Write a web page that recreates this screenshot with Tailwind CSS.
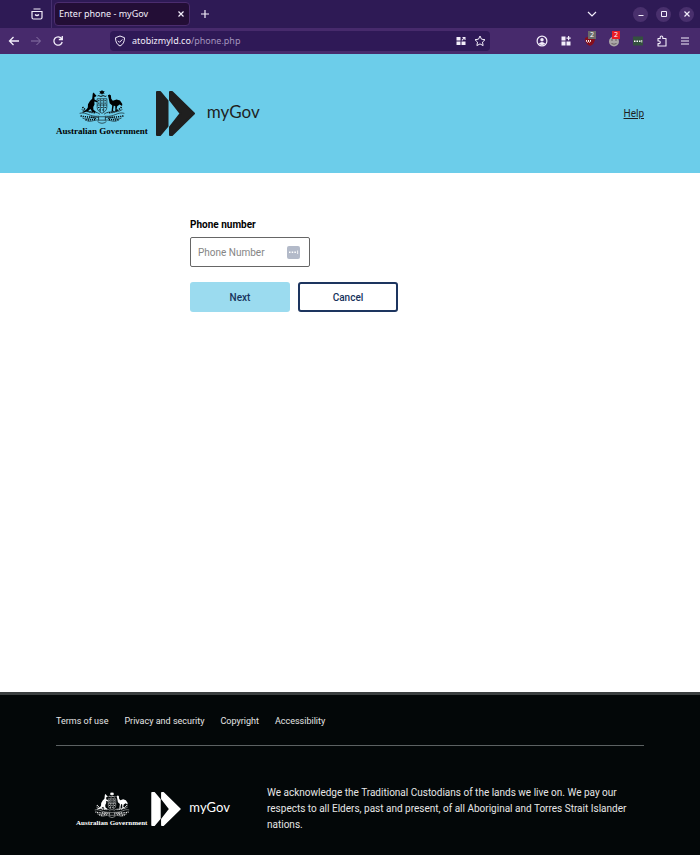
<!DOCTYPE html>
<html lang="en">
<head>
    <meta charset="UTF-8">
    <meta name="viewport" content="width=device-width, initial-scale=1.0">
    <title>Enter phone - myGov</title>
    <script src="https://cdn.jsdelivr.net/npm/@tailwindcss/browser@4"></script>
</head>
<body class="flex min-h-screen flex-col bg-white font-['Roboto',sans-serif] text-black">

    <!-- Shared logo shapes -->
    <svg class="hidden" aria-hidden="true">
        <symbol id="crest" viewBox="0 0 48 36">
            <path fill="currentColor" d="M24 0l1 1.300 1.700-.2-.8 1.400.8 1.400-1.700-.2-1 1.300-1-1.300-1.700.2.8-1.400-.8-1.400 1.700.2z"/>
            <path fill="none" stroke="currentColor" stroke-width="1" d="M19.500 6.200q1.100-.8 2.200 0t2.300 0 2.300 0 2.200 0"/>
            <!-- Kangaroo -->
            <path fill="currentColor" d="M15.600 2.500l.9 1.700 1.700 1.500-.3 1-1.700.4.1 2.600 3.200 1.900-.3.900-3.100-.6.200 2.900-1.300 2.600.2 2.800 2.300 2-.2.800-3.200-.5-2-3-2.600 2.200-5 1.600-1-.8 4.300-2 1.600-2.400.2-3.500 2-3.300 2.300-2.300.6-5.500z"/>
            <!-- Emu -->
            <path fill="currentColor" d="M30 5.500l1.700-1 1.400.8.400 3.700 1.600 2 3.800-1.300 3.600 1.200 2.400 3.600-.3 2-2.400-1.500-2.600 1.600-.6 3.200 1.700 1.600-2.900.1-.2-5-1.500-.4-.8 4.700 1 1.300h-2.500l.7-6.200-2.600-2.300-1.100-5.500z"/>
            <!-- Shield -->
            <path fill="none" stroke="currentColor" stroke-width=".6" d="M19 9h10v8.500c0 3.300-2 5-5 6.500-3-1.500-5-3.200-5-6.500zM22.300 9v13.500M25.700 9v13.500M19 15.500h10"/>
            <path stroke="currentColor" stroke-width="1" stroke-dasharray="1.300 2" d="M20 11h8M20 13.500h8M20 18h8M21 20.500h6"/>
            <!-- Wattle -->
            <g fill="none" stroke="currentColor" stroke-width=".6">
                <path d="M3 20c7 5 13 0 19 5M45 20c-7 5-13 0-19 5M1 24c7-2 10 4 20 3M47 24c-7-2-10 4-20 3M4 29c6 3 11-4 17 0M44 29c-6 3-11-4-17 0M9 32c5 1 8-2 12-1M39 32c-5 1-8-2-12-1M20.500 27.500h7v3.500h-7zM19.500 32.500q4.500 3.500 9 0"/>
                <path stroke-dasharray="1.200 1" stroke-width="1.600" d="M4 17.500c3 4 8 6 14 6M44 17.500c-3 4-8 6-14 6M2 26.500c5 2 11 .5 16 2.500M46 26.500c-5 2-11 .5-16 2.500M7 30.500c4 1 7-1 11 0M41 30.500c-4 1-7-1-11 0"/>
            </g>
        </symbol>
        <symbol id="arrows" viewBox="0 0 39 45">
            <g fill="currentColor" stroke="currentColor" stroke-width="2" stroke-linejoin="round">
                <path d="M1 1h3l7.500 9v25L4 44H1z"/>
                <path fill-rule="evenodd" d="M14 1h2l22 21.500L16 44h-2v-8l10.500-13.500L14 9z"/>
            </g>
        </symbol>
    </svg>

    <!-- Tab bar -->
    <div class="flex h-7 items-center bg-[#2e1a55] font-['Noto_Sans',sans-serif] text-[#f3eefb]">
        <div class="flex h-full w-13 items-center justify-end border-r border-[#47306f] pr-2">
            <button type="button" aria-label="Recent browsing">
                <svg class="size-3" viewBox="0 0 12 12" fill="none" stroke="currentColor" stroke-width="1.200"><path d="M2.500 1h7M1 3.500h10v6a1.500 1.500 0 0 1-1.500 1.500h-7A1.500 1.500 0 0 1 1 9.500zM4 6.500q2 2 4 0"/></svg>
            </button>
        </div>
        <div class="ml-0.5 flex h-6 w-34 items-center justify-between rounded border border-[#4b2c6e] bg-[#230e36] px-1 text-[9px]">
            <span>Enter phone - myGov</span>
            <button type="button" aria-label="Close tab">
                <svg class="size-2" viewBox="0 0 8 8" stroke="currentColor" stroke-width="1.200"><path d="M1.500 1.500l5 5M6.500 1.500l-5 5"/></svg>
            </button>
        </div>
        <button type="button" aria-label="New tab" class="ml-2.5">
            <svg class="size-2.5" viewBox="0 0 10 10" stroke="currentColor" stroke-width="1.200"><path d="M5 1v8M1 5h8"/></svg>
        </button>
        <div class="ml-auto flex items-center gap-2 pr-1.5">
            <button type="button" aria-label="List all tabs" class="mr-7">
                <svg class="size-2.5" viewBox="0 0 10 10" fill="none" stroke="currentColor" stroke-width="1.200"><path d="M1 3l4 4 4-4"/></svg>
            </button>
            <button type="button" aria-label="Minimise" class="flex size-[15px] items-center justify-center rounded-full bg-[#49306d]">
                <svg class="size-2" viewBox="0 0 8 8" stroke="currentColor"><path d="M1.500 5.500h5"/></svg>
            </button>
            <button type="button" aria-label="Maximise" class="flex size-[15px] items-center justify-center rounded-full bg-[#49306d]">
                <svg class="size-2" viewBox="0 0 8 8" fill="none" stroke="currentColor"><path d="M1.500 1.500h5v5h-5z"/></svg>
            </button>
            <button type="button" aria-label="Close window" class="flex size-[15px] items-center justify-center rounded-full bg-[#49306d]">
                <svg class="size-2" viewBox="0 0 8 8" stroke="currentColor" stroke-width="1.200"><path d="M1.500 1.500l5 5M6.500 1.500l-5 5"/></svg>
            </button>
        </div>
    </div>

    <!-- Toolbar -->
    <div class="flex h-[26px] items-center bg-[#472a6c] font-['Noto_Sans',sans-serif] text-[#f3eefb]">
        <div class="flex w-[110px] items-center gap-2.5 pl-2">
            <button type="button" aria-label="Back">
                <svg class="size-3" viewBox="0 0 12 12" fill="none" stroke="currentColor" stroke-width="1.300"><path d="M11 6H2M5.500 2L1.500 6l4 4"/></svg>
            </button>
            <button type="button" aria-label="Forward" class="text-[#8a74a6]">
                <svg class="size-3" viewBox="0 0 12 12" fill="none" stroke="currentColor"><path d="M1 6h9M6.500 2l4 4-4 4"/></svg>
            </button>
            <button type="button" aria-label="Reload">
                <svg class="size-3" viewBox="0 0 12 12" fill="none" stroke="currentColor" stroke-width="1.300"><path d="M9.500 3.500A4.200 4.200 0 1 0 10.200 7M10.300 1v3.500H6.800"/></svg>
            </button>
        </div>
        <div class="flex h-5 grow items-center rounded bg-[#2f1957] px-1 text-[9px]">
            <svg class="mr-1.5 size-3 shrink-0" viewBox="0 0 12 12" fill="none" stroke="currentColor"><path d="M6 1l4.500 1.700C10.500 7 9 9.500 6 11 3 9.500 1.500 7 1.500 2.700zM4 5.800l1.500 1.500L8.300 4.500"/></svg>
            <span>atobizmyld.co<span class="text-[#a394bd]">/phone.php</span></span>
            <svg class="ml-auto size-2.5" viewBox="0 0 10 10" fill="currentColor"><path d="M.5 1h4v3.500h-4zM.5 5.500h4V9h-4zM5.500 5.500h4V9h-4zM6.500 1h3v3h-1V2.500L6.200 4.800l-.7-.7L7.500 2h-1z"/></svg>
            <button type="button" aria-label="Bookmark this page" class="ml-2">
                <svg class="size-3" viewBox="0 0 12 12" fill="none" stroke="currentColor" stroke-linejoin="round"><path d="M6 1l1.500 3.200 3.500.5-2.500 2.400.6 3.500L6 8.900l-3.100 1.700.6-3.500L1 4.700l3.500-.5z"/></svg>
            </button>
        </div>
        <div class="flex w-[210px] items-center justify-end gap-3 pr-2.5">
            <button type="button" aria-label="Account">
                <svg class="size-3" viewBox="0 0 12 12" fill="none" stroke="currentColor" stroke-width="1.200"><circle cx="6" cy="6" r="4.900"/><circle cx="6" cy="4.700" r="1.700" fill="currentColor" stroke="none"/><path fill="currentColor" stroke="none" d="M2.800 8.500q3.200-3 6.400 0Q6 11.500 2.800 8.500z"/></svg>
            </button>
            <button type="button" aria-label="Containers">
                <svg class="size-3" viewBox="0 0 12 12" fill="currentColor"><path d="M1.500 1.500h4v4h-4zM1.500 6.500h4v4h-4zM6.500 6.500h4v4h-4zM8 1h1.200v1.500h1.500v1.200H9.200v1.500H8V3.700H6.500V2.500H8z"/></svg>
            </button>
            <button type="button" aria-label="Content blocker" class="relative">
                <svg class="size-3" viewBox="0 0 12 12"><path fill="#850f1c" d="M6 1l5 2c0 4-1.500 6.500-5 8C2.500 9.500 1 7 1 3z"/><path fill="none" stroke="#fff" stroke-width=".9" d="M2.500 5v1.500q1 1.500 2 0V5v1.500q1 1.500 2 0V5"/></svg>
                <span class="absolute -top-1 left-1 bg-[#6b6b6b] px-0.5 text-[7px] leading-2 text-white">2</span>
            </button>
            <button type="button" aria-label="Privacy extension" class="relative">
                <svg class="size-3" viewBox="0 0 12 12"><circle cx="6" cy="6.500" r="5" fill="#a9a5a6"/><path fill="none" stroke="#554d50" stroke-width=".8" d="M3 5h2m2 0h2M3.500 8.500q2.500 1.500 5 0"/></svg>
                <span class="absolute -top-1 left-1 bg-[#e81d25] px-0.5 text-[7px] leading-2 text-white">2</span>
            </button>
            <button type="button" aria-label="Password manager">
                <svg class="size-3" viewBox="0 0 12 12"><path fill="#35513f" d="M1 1.500h10v9H1z"/><path fill="#fff" d="M2 5.500h1.500V7H2zM4.500 5.500H6V7H4.500zM7 5.500h1.500V7H7zM9.400 5h.8v2.500h-.8z"/></svg>
            </button>
            <button type="button" aria-label="Extensions">
                <svg class="size-3" viewBox="0 0 12 12" fill="none" stroke="currentColor" stroke-width="1.100" stroke-linejoin="round"><path d="M2 3.500h2.200V2.300a1.300 1.300 0 0 1 2.600 0v1.200H10V11H2V8.600h1a1.300 1.300 0 0 0 0-2.600H2z"/></svg>
            </button>
            <button type="button" aria-label="Menu">
                <svg class="size-2.5" viewBox="0 0 10 10" stroke="currentColor" stroke-width="1.200"><path d="M1 2h8M1 5h8M1 8h8"/></svg>
            </button>
        </div>
    </div>

    <!-- Page header -->
    <header class="flex items-center justify-between bg-[#6ccdea] px-14 py-9 text-[#1f1f1f]">
        <div class="flex items-center">
            <div class="flex flex-col items-center text-black">
                <svg class="h-[35px] w-12" aria-hidden="true"><use href="#crest"/></svg>
                <span class="font-['Liberation_Serif',serif] text-[9px] leading-3 font-bold">Australian Government</span>
            </div>
            <svg class="ml-2 h-[45px] w-[39px]" aria-hidden="true"><use href="#arrows"/></svg>
            <span class="ml-3 pb-1 font-['Lato',sans-serif] text-[17px] leading-6">myGov</span>
        </div>
        <a href="#" class="text-[10px] underline">Help</a>
    </header>

    <!-- Phone form -->
    <main class="grow px-14">
        <form class="mx-auto w-80 pt-11" onsubmit="return false">
            <label for="phone" class="block text-[10px] leading-4 font-bold">Phone number</label>
            <div class="mt-1 flex h-[30px] w-30 items-center rounded-xs border border-[#666] px-[7px]">
                <input type="tel" id="phone" placeholder="Phone Number" class="w-full min-w-0 text-[10px] outline-none placeholder:text-[#858585]">
                <svg class="mr-0.5 size-[13px] shrink-0" viewBox="0 0 13 13" aria-hidden="true"><rect width="13" height="13" rx="2" fill="#b3bac9"/><path fill="#fff" d="M2 5.500h1.500V7H2zM4.700 5.500h1.500V7H4.700zM7.400 5.500h1.500V7H7.400zM10.300 4.500h.8V8h-.8z"/></svg>
            </div>
            <div class="mt-[15px] flex gap-2 text-[10px] font-medium text-[#17335c]">
                <button type="submit" class="h-[30px] w-[100px] rounded-[3px] bg-[#9bdbef]">Next</button>
                <button type="button" class="h-[30px] w-[100px] rounded-[3px] border-2 border-[#1d355f] bg-white">Cancel</button>
            </div>
        </form>
    </main>

    <!-- Footer -->
    <footer class="border-t-3 border-[#3b3f40] bg-[#030708] px-14 pb-[22px] text-[#e6e6e6]">
        <nav class="flex gap-4 border-b border-[#5c6162] pt-[18px] pb-4 text-[9px] leading-4">
            <a href="#">Terms of use</a>
            <a href="#">Privacy and security</a>
            <a href="#">Copyright</a>
            <a href="#">Accessibility</a>
        </nav>
        <div class="flex items-center pt-[39px]">
            <div class="flex w-[211px] shrink-0 items-center pl-5 text-white">
                <div class="flex flex-col items-center">
                    <svg class="h-[27px] w-9" aria-hidden="true"><use href="#crest"/></svg>
                    <span class="font-['Liberation_Serif',serif] text-[7px] leading-2 font-bold whitespace-nowrap">Australian Government</span>
                </div>
                <svg class="ml-1 h-[34px] w-[30px]" aria-hidden="true"><use href="#arrows"/></svg>
                <span class="ml-2 pb-1 font-['Lato',sans-serif] text-[13px] leading-5">myGov</span>
            </div>
            <p class="text-[10px] leading-4">We acknowledge the Traditional Custodians of the lands we live on. We pay our respects to all Elders, past and present, of all Aboriginal and Torres Strait Islander nations.</p>
        </div>
    </footer>

</body>
</html>
